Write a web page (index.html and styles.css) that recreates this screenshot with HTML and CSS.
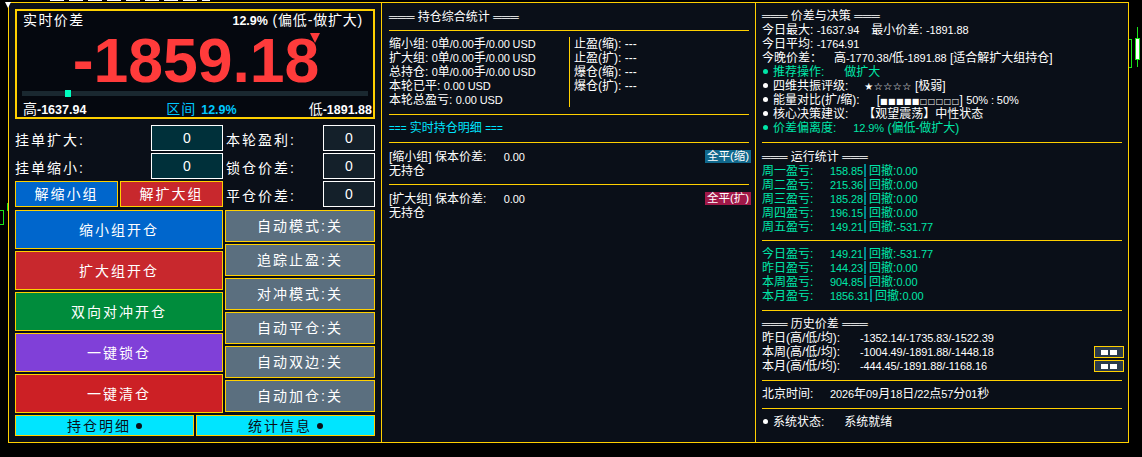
FILE: index.html
```html
<html>
	<head>
		<link rel="stylesheet" href="styles.css">
	</head>
	<body>
		<div class="top-strip"></div>
		<div class="corner-mark"></div>
		<div class="candle-wick"></div>
		<div class="candle"></div>
		<div class="bracket"></div>
		<div class="left-wick"></div>
		<div class="left-bracket"></div>

		<div class="app">
			<div class="col left">
				<div class="hero">
					<div class="hero-top">
						<span class="hero-title">实时价差</span>
						<span class="hero-pct"><b>12.9%</b> (偏低-做扩大)</span>
					</div>
					<div class="hero-value">-1859.18</div>
					<div class="hero-arrow"></div>
					<div class="slider"><div class="slider-thumb"></div></div>
					<div class="hero-bottom">
						<span class="hero-lab">高<b>-1637.94</b></span>
						<span class="hero-range">区间 <b>12.9%</b></span>
						<span class="hero-lab">低<b>-1891.88</b></span>
					</div>
				</div>

				<div class="fields">
					<span class="field-lab">挂单扩大:</span>
					<div class="input dark-teal">0</div>
					<span class="field-lab inner">本轮盈利:</span>
					<div class="input dark-slate">0</div>

					<span class="field-lab">挂单缩小:</span>
					<div class="input dark-teal">0</div>
					<span class="field-lab inner">锁仓价差:</span>
					<div class="input dark-slate">0</div>

					<div class="unlock-row">
						<div class="btn blue">解缩小组</div>
						<div class="btn red">解扩大组</div>
					</div>
					<span class="field-lab inner">平仓价差:</span>
					<div class="input dark-slate">0</div>
				</div>

				<div class="actions">
					<div class="action-main">
						<div class="btn blue">缩小组开仓</div>
						<div class="btn red">扩大组开仓</div>
						<div class="btn green">双向对冲开仓</div>
						<div class="btn purple">一键锁仓</div>
						<div class="btn crimson">一键清仓</div>
					</div>
					<div class="action-side">
						<div class="btn grey">自动模式:关</div>
						<div class="btn grey">追踪止盈:关</div>
						<div class="btn grey">对冲模式:关</div>
						<div class="btn grey">自动平仓:关</div>
						<div class="btn grey">自动双边:关</div>
						<div class="btn grey">自动加仓:关</div>
					</div>
				</div>

				<div class="tabs">
					<div class="btn cyan">持仓明细 <span class="tab-dot"></span></div>
					<div class="btn cyan">统计信息 <span class="tab-dot"></span></div>
				</div>
			</div>

			<div class="col mid">
				<div class="title">═══ 持仓综合统计 ═══</div>
				<div class="rule"></div>
				<div class="summary">
					<div class="summary-left">
						<div class="row">缩小组: <span class="n">0</span>单<span class="n">/0.00</span>手<span class="n">/0.00 USD</span></div>
						<div class="row">扩大组: <span class="n">0</span>单<span class="n">/0.00</span>手<span class="n">/0.00 USD</span></div>
						<div class="row">总持仓: <span class="n">0</span>单<span class="n">/0.00</span>手<span class="n">/0.00 USD</span></div>
						<div class="row">本轮已平: <span class="n">0.00 USD</span></div>
						<div class="row">本轮总盈亏: <span class="n">0.00 USD</span></div>
					</div>
					<div class="summary-right">
						<div class="row">止盈(缩): ---</div>
						<div class="row">止盈(扩): ---</div>
						<div class="row">爆仓(缩): ---</div>
						<div class="row">爆仓(扩): ---</div>
					</div>
				</div>
				<div class="rule gap-a"></div>
				<div class="detail-title"><span class="eq">===</span> 实时持仓明细 <span class="eq">===</span></div>
				<div class="rule gap-a"></div>
				<div class="group">
					<div class="group-head">
						<span>[缩小组] 保本价差: <span class="n be">0.00</span></span>
						<span class="tag tag-teal">全平(缩)</span>
					</div>
					<div class="row">无持仓</div>
				</div>
				<div class="rule"></div>
				<div class="group">
					<div class="group-head">
						<span>[扩大组] 保本价差: <span class="n be">0.00</span></span>
						<span class="tag tag-pink">全平(扩)</span>
					</div>
					<div class="row">无持仓</div>
				</div>
			</div>

			<div class="col right">
				<div class="title">═══ 价差与决策 ═══</div>
				<div class="row">今日最大: <span class="n">-1637.94</span><span class="min-gap">最小价差: <span class="n">-1891.88</span></span></div>
				<div class="row">今日平均: <span class="n">-1764.91</span></div>
				<div class="row">今晚价差：<span class="tonight">高<span class="n">-1770.38</span>/低<span class="n">-1891.88</span> [适合解扩大组持仓]</span></div>
				<div class="row mint"><span class="dot"></span>推荐操作:<span class="pad-a">做扩大</span></div>
				<div class="row"><span class="dot"></span>四维共振评级:<span class="pad-b"><span class="stars">★☆☆☆☆</span> [极弱]</span></div>
				<div class="row"><span class="dot"></span>能量对比(扩/缩):<span class="pad-c">[<span class="squares">■■■■■□□□□□</span>] <span class="n">50% : 50%</span></span></div>
				<div class="row"><span class="dot"></span>核心决策建议:<span class="pad-d">【观望震荡】中性状态</span></div>
				<div class="row mint"><span class="dot"></span>价差偏离度:<span class="pad-e"><span class="n">12.9%</span> (偏低-做扩大)</span></div>
				<div class="rule rule-r"></div>

				<div class="title after-first">═══ 运行统计 ═══</div>
				<div class="mint">
					<div class="row"><span class="stat-lab">周一盈亏:</span><span class="n">158.85</span><i class="sep"></i>回撤:<span class="n">0.00</span></div>
					<div class="row"><span class="stat-lab">周二盈亏:</span><span class="n">215.36</span><i class="sep"></i>回撤:<span class="n">0.00</span></div>
					<div class="row"><span class="stat-lab">周三盈亏:</span><span class="n">185.28</span><i class="sep"></i>回撤:<span class="n">0.00</span></div>
					<div class="row"><span class="stat-lab">周四盈亏:</span><span class="n">196.15</span><i class="sep"></i>回撤:<span class="n">0.00</span></div>
					<div class="row"><span class="stat-lab">周五盈亏:</span><span class="n">149.21</span><i class="sep"></i>回撤:<span class="n">-531.77</span></div>
				</div>
				<div class="rule rule-r tight"></div>
				<div class="mint">
					<div class="row"><span class="stat-lab">今日盈亏:</span><span class="n">149.21</span><i class="sep"></i>回撤:<span class="n">-531.77</span></div>
					<div class="row"><span class="stat-lab">昨日盈亏:</span><span class="n">144.23</span><i class="sep"></i>回撤:<span class="n">0.00</span></div>
					<div class="row"><span class="stat-lab">本周盈亏:</span><span class="n">904.85</span><i class="sep"></i>回撤:<span class="n">0.00</span></div>
					<div class="row"><span class="stat-lab">本月盈亏:</span><span class="n">1856.31</span><i class="sep"></i>回撤:<span class="n">0.00</span></div>
				</div>
				<div class="rule rule-r"></div>

				<div class="title">═══ 历史价差 ═══</div>
				<div class="row hist"><span class="hist-lab">昨日(高/低/均):</span><span class="n">-1352.14/-1735.83/-1522.39</span></div>
				<div class="row hist"><span class="hist-lab">本周(高/低/均):</span><span class="n">-1004.49/-1891.88/-1448.18</span><span class="mini-btn"><i></i><i></i></span></div>
				<div class="row hist"><span class="hist-lab">本月(高/低/均):</span><span class="n">-444.45/-1891.88/-1168.16</span><span class="mini-btn"><i></i><i></i></span></div>
				<div class="rule rule-r"></div>
				<div class="row"><span class="stat-lab">北京时间:</span><span class="n">2026</span>年<span class="n">09</span>月<span class="n">18</span>日<span class="n">/22</span>点<span class="n">57</span>分<span class="n">01</span>秒</div>
				<div class="rule rule-r"></div>
				<div class="row"><span class="dot"></span>系统状态:<span class="pad-a">系统就绪</span></div>
			</div>
		</div>
	</body>

</html>
```

FILE: styles.css
```css
* {
  box-sizing: border-box;
}

body {
  margin: 0;
  height: 457px;
  overflow: hidden;
  position: relative;
  background-color: #000;
  color: #fff;
  font-family: "Liberation Sans", "Noto Sans CJK SC", sans-serif;
  font-size: 12px;
  line-height: 14px;
}

.app {
  --gold: #ffd000;
  display: grid;
  grid-template-columns: 373px 374px 372px;
  margin: 2px 0 0 8px;
  width: 1121px;
  height: 441px;
  border: 1px solid var(--gold);
  background-color: #0a0f18;
}

.col {
  border-right: 1px solid var(--gold);
}

.col:last-child {
  border-right: 0;
}

.row {
  height: 14px;
  white-space: nowrap;
}

.n {
  font-size: 11px;
  letter-spacing: -0.1px;
}

/* left column */

.left {
  padding: 6px 6px 0;
}

.hero {
  position: relative;
  height: 110px;
  border: 2px solid var(--gold);
  background-color: #05080f;
  padding: 0 0 0 5px;
}

.hero-top {
  display: flex;
  justify-content: space-between;
  align-items: center;
  height: 18px;
  padding-left: 1px;
  padding-right: 10px;
  font-size: 14px;
}

.hero-title {
  letter-spacing: 1.4px;
}

.hero-pct {
  font-size: 14px;
  letter-spacing: 0.8px;
}

.hero-pct b {
  font-size: 12.5px;
  letter-spacing: 0;
}

.hero-value {
  margin-left: -3px;
  height: 62px;
  color: #ff3b3b;
  font-size: 62.5px;
  font-weight: bold;
  line-height: 62px;
  text-align: center;
}

.hero-arrow {
  position: absolute;
  top: 22px;
  left: 293px;
  width: 0;
  height: 0;
  border-top: 10px solid #ff3b3b;
  border-left: 5px solid transparent;
  border-right: 5px solid transparent;
}

.slider {
  position: relative;
  margin-right: 5px;
  height: 5px;
  background-color: #1a2830;
}

.slider-thumb {
  position: absolute;
  top: -1px;
  left: 43px;
  width: 6px;
  height: 7px;
  background-color: #00ffc0;
}

.hero-bottom {
  display: flex;
  justify-content: space-between;
  align-items: center;
  margin-top: 5px;
  height: 16px;
  padding-left: 1px;
  padding-right: 1px;
  font-size: 14px;
}

.hero-bottom b {
  font-size: 12.5px;
}

.hero-range {
  margin-left: 8px;
  color: #00c8ff;
  letter-spacing: 1px;
}

.hero-range b {
  letter-spacing: 0;
}

.fields {
  display: grid;
  grid-template-columns: 136px 72px 100px 52px;
  grid-auto-rows: 26px;
  row-gap: 2px;
  margin-top: 6px;
  align-items: center;
}

.field-lab {
  padding-top: 4px;
  font-size: 14px;
  letter-spacing: 2px;
}

.field-lab.inner {
  padding-left: 3px;
}

.input {
  display: flex;
  align-items: center;
  justify-content: center;
  height: 26px;
  border: 1px solid #fff;
  font-size: 14px;
}

.dark-teal {
  background-color: #00303a;
}

.dark-slate {
  background-color: #14202a;
}

.unlock-row {
  grid-column: 1 / 3;
  display: grid;
  grid-template-columns: 103px 103px;
  gap: 2px;
  height: 26px;
}

.btn {
  display: flex;
  align-items: center;
  justify-content: center;
  border: 1px solid var(--gold);
  font-size: 14px;
  letter-spacing: 2px;
}

.blue {
  background-color: #0066cc;
}

.red {
  background-color: #c8282d;
}

.green {
  background-color: #008c3c;
}

.purple {
  background-color: #8040d8;
}

.crimson {
  background-color: #cc2025;
}

.grey {
  background-color: #5b6f7f;
}

.cyan {
  background-color: #00e5ff;
  color: #0a0f18;
}

.tab-dot {
  width: 6px;
  height: 6px;
  margin-left: 5px;
  border-radius: 50%;
  background-color: #0a0f18;
}

.actions {
  display: grid;
  grid-template-columns: 208px 150px;
  gap: 2px;
  margin-top: 3px;
}

.action-main {
  display: grid;
  grid-auto-rows: 39px;
  row-gap: 2px;
}

.action-side {
  display: grid;
  grid-auto-rows: 32px;
  row-gap: 2px;
}

.tabs {
  display: grid;
  grid-template-columns: 179px 179px;
  gap: 2px;
  margin-top: 2px;
  height: 21px;
}

/* middle column */

.mid {
  padding: 7px 6px 0 7px;
}

.title {
  height: 14px;
}

.rule {
  height: 1px;
  margin: 6px 0;
  background-color: var(--gold);
}

.summary {
  display: grid;
  grid-template-columns: 180px 1fr;
  height: 70px;
}

.summary-right {
  border-left: 1px solid var(--gold);
  padding-left: 4px;
}

.gap-a {
  margin-top: 7px;
}

.detail-title {
  height: 14px;
  color: #00e5ff;
}

.eq {
  font-size: 10px;
}

.group {
  height: 29px;
}

.group-head {
  display: flex;
  justify-content: space-between;
  align-items: center;
  height: 15px;
}

.be {
  margin-left: 14px;
}

.tag {
  width: 46px;
  height: 13px;
  margin-right: -2px;
  font-size: 11.5px;
  line-height: 13px;
  text-align: center;
  white-space: nowrap;
}

.tag-teal {
  background-color: #10688c;
}

.tag-pink {
  background-color: #a01848;
}

/* right column */

.right {
  padding: 6px 6px 0;
}

.rule-r {
  margin: 7px 0 6px;
}

.rule-r.tight {
  margin-top: 6px;
}

.after-first {
  margin-top: 7px;
}

.mint {
  color: #00e6a8;
}

.dot {
  display: inline-block;
  width: 5px;
  height: 5px;
  margin: 0 5px 2px 1px;
  border-radius: 50%;
  background-color: currentColor;
}

.min-gap {
  margin-left: 12px;
}

.tonight {
  margin-left: 12px;
}

.pad-a {
  margin-left: 20px;
}

.pad-b {
  margin-left: 16px;
}

.pad-c {
  margin-left: 17px;
}

.pad-d {
  margin-left: 15px;
}

.pad-e {
  margin-left: 17px;
}

.stars {
  font-family: "DejaVu Sans", sans-serif;
  font-size: 10px;
  letter-spacing: 0.5px;
}

.squares {
  font-family: "DejaVu Sans", sans-serif;
  font-size: 8px;
  letter-spacing: 0.4px;
}

.stat-lab {
  display: inline-block;
  width: 68px;
}

.sep {
  display: inline-block;
  width: 2px;
  height: 13px;
  margin: 0 3px 0 1px;
  vertical-align: -2px;
  background-color: #008a94;
}

.hist {
  position: relative;
}

.hist-lab {
  display: inline-block;
  width: 98px;
}

.mini-btn {
  position: absolute;
  top: 1px;
  right: -2px;
  display: flex;
  align-items: center;
  justify-content: center;
  gap: 2px;
  width: 30px;
  height: 12px;
  border: 1px solid var(--gold);
  background-color: #2a3a4c;
}

.mini-btn i {
  width: 7px;
  height: 5px;
  background-color: #fff;
}

/* bits of the chart behind the panel */

.top-strip {
  position: absolute;
  top: 0;
  left: 50px;
  width: 160px;
  height: 1px;
  background: repeating-linear-gradient(90deg, #fff 0 14px, transparent 14px 19px);
}

.corner-mark {
  position: absolute;
  top: 2px;
  left: 5px;
  z-index: 1;
  width: 0;
  height: 0;
  border-top: 6px solid #fff;
  border-left: 3px solid transparent;
  border-right: 3px solid transparent;
}

.candle-wick {
  position: absolute;
  top: 27px;
  left: 1137px;
  width: 1px;
  height: 40px;
  background-color: #19e619;
}

.candle {
  position: absolute;
  top: 38px;
  left: 1135px;
  width: 5px;
  height: 22px;
  border: 1px solid #19e619;
  background-color: #fff;
}

.bracket {
  position: absolute;
  top: 39px;
  left: 1129px;
  width: 3px;
  height: 29px;
  border: 1px solid #19e619;
  border-left: 0;
}

.left-wick {
  position: absolute;
  top: 203px;
  left: 7px;
  width: 1px;
  height: 8px;
  background-color: #19e619;
}

.left-bracket {
  position: absolute;
  top: 210px;
  left: 0;
  width: 4px;
  height: 15px;
  border: 1px solid #19e619;
  border-left: 0;
}
```
